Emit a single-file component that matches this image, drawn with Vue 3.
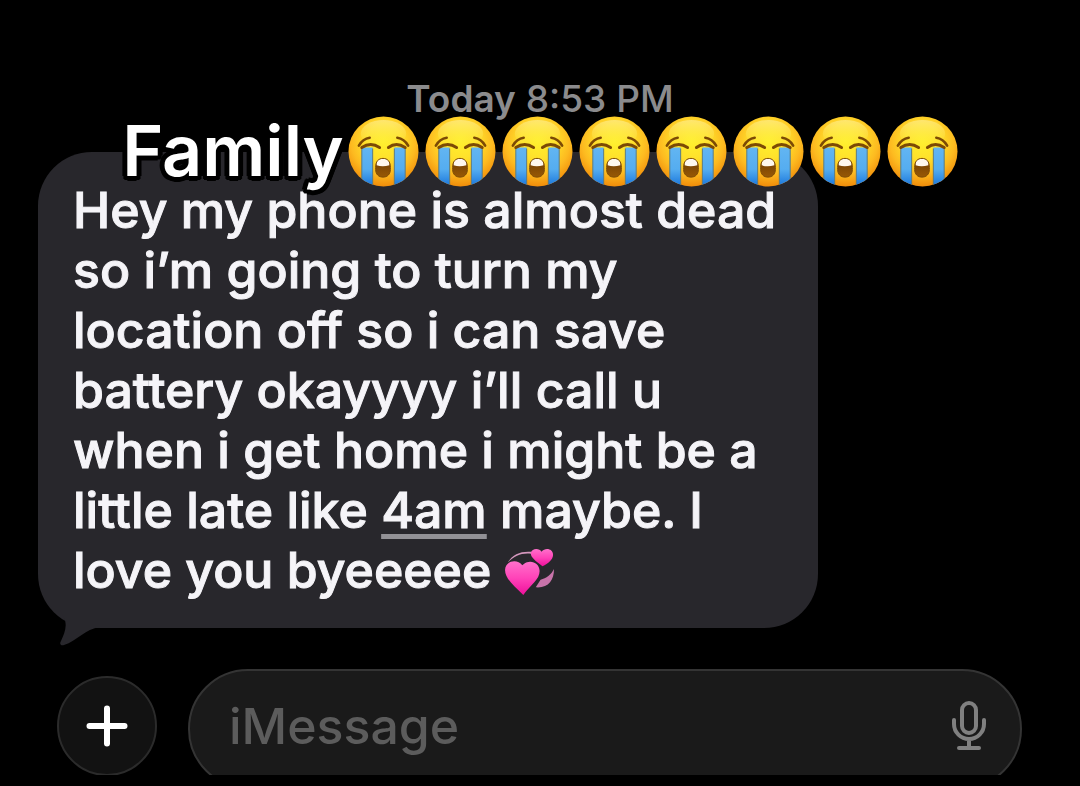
<script setup>
import { ref } from 'vue'

const draft = ref('')
const lines = [
  'Hey my phone is almost dead',
  'so i’m going to turn my',
  'location off so i can save',
  'battery okayyyy i’ll call u',
  'when i get home i might be a',
]
</script>

<template>
  <main class="chat">
    <svg class="defs" width="0" height="0" aria-hidden="true">
      <defs>
        <radialGradient id="face" cx="50%" cy="36%" r="64%">
          <stop offset="0" stop-color="#fff02c" />
          <stop offset="0.4" stop-color="#ffe02b" />
          <stop offset="0.72" stop-color="#fdba20" />
          <stop offset="1" stop-color="#f08c0a" />
        </radialGradient>
        <linearGradient id="shine" x1="0" y1="0" x2="0" y2="1">
          <stop offset="0" stop-color="#fff0a0" stop-opacity="0.6" />
          <stop offset="1" stop-color="#fff04a" stop-opacity="0" />
        </linearGradient>
        <linearGradient id="tear" x1="0" y1="0" x2="0" y2="1">
          <stop offset="0" stop-color="#62b5f2" />
          <stop offset="0.55" stop-color="#55adf0" />
          <stop offset="1" stop-color="#1673da" />
        </linearGradient>
        <linearGradient id="mouth" x1="0" y1="0" x2="0" y2="1">
          <stop offset="0" stop-color="#6b3a04" />
          <stop offset="1" stop-color="#9a5a05" />
        </linearGradient>
        <clipPath id="round"><circle cx="36" cy="36" r="35.5" /></clipPath>
        <clipPath id="lips"><path d="M28 52C28 46 31 43 35.500 43S43 46 43 52V54C43 59 40 62 35.500 62S28 59 28 54Z" /></clipPath>
        <symbol id="sob" viewBox="0 0 72 72">
          <circle cx="36" cy="36" r="35.5" fill="url(#face)" />
          <ellipse cx="36" cy="18" rx="23" ry="14" fill="url(#shine)" />
          <g clip-path="url(#round)">
            <path d="M14 32H25V72H14Z" fill="url(#tear)" />
            <path d="M47 32H58V72H47Z" fill="url(#tear)" />
            <path d="M14 33V72M25 33V72M47 33V72M58 33V72" stroke="#597b83" stroke-width="1" />
          </g>
          <g fill="none" stroke="#7c4a05" stroke-linecap="round">
            <path d="M11 30Q15 23 22 22" stroke-width="2.6" />
            <path d="M50 22Q57 23 61 30" stroke-width="2.6" />
            <path d="M14 32Q23 26 32 32" stroke-width="3" />
            <path d="M41 32Q49 26 58 32" stroke-width="3" />
          </g>
          <g clip-path="url(#lips)">
            <path d="M27 42H44V63H27Z" fill="url(#mouth)" />
            <path d="M29 42H42V50Q35 52 29 50Z" fill="#fff8ee" />
          </g>
          <path d="M28 52C28 46 31 43 35.500 43S43 46 43 52V54C43 59 40 62 35.500 62S28 59 28 54Z" fill="none" stroke="#7c4a05" />
        </symbol>
        <linearGradient id="pink" x1="0" y1="0" x2="0" y2="1">
          <stop offset="0" stop-color="#ff70cb" />
          <stop offset="0.5" stop-color="#ff43b8" />
          <stop offset="1" stop-color="#ee109b" />
        </linearGradient>
      </defs>
    </svg>

    <p class="stamp"><b>Today</b> 8:53 PM</p>

    <section class="thread">
      <article class="bubble">
        <p class="message">
          <template v-for="line in lines" :key="line">{{ line }}<br /></template>
          little late like <a class="time" href="#">4am</a> maybe. I<br />
          love you byeeeee
          <svg class="hearts" viewBox="0 0 52 50" role="img" aria-label="Revolving hearts">
            <path d="M3 15C8 6 17 3 28 4L27 6C17 5 10 8 3 15Z" fill="#d497bd" />
            <path d="M51 22C51 34 45 42 32 41L37 33C43 32 48 28 51 22Z" fill="#c873aa" />
            <path d="M39 19C31 13 26 9 27 5C28 0 36 0 38 4C42 -1 50 1 50 7C50 12 45 16 39 19Z" fill="url(#pink)" />
            <path d="M19 49C9 39 0 32 0 23C0 13 13 11 18 18C25 11 36 15 36 24C36 33 27 38 19 49Z" fill="url(#pink)" />
          </svg>
        </p>
        <svg class="tail" viewBox="0 0 44 36" aria-hidden="true">
          <path d="M0 0L4 8C8 16 4 24 1 31C-1 34 1 36 4 35C17 31 25 19 40 17H44V0Z" fill="#28272c" />
        </svg>
      </article>

      <h1 class="caption">
        <span class="word">Family</span>
        <span class="emojis">
          <svg v-for="n in 8" :key="n" class="emoji" role="img" aria-label="Loudly crying face"><use href="#sob" /></svg>
        </span>
      </h1>
    </section>

    <form class="composer" @submit.prevent>
      <button class="add" type="button" aria-label="Add attachment">
        <svg viewBox="0 0 42 42" aria-hidden="true"><path d="M21 3.500V38.500M3.500 21H38.500" /></svg>
      </button>
      <div class="field">
        <input v-model="draft" type="text" placeholder="iMessage" aria-label="iMessage" />
        <button class="mic" type="button" aria-label="Dictate">
          <svg viewBox="0 0 36 50" aria-hidden="true">
            <rect x="11" y="2" width="14" height="30" rx="7" />
            <path d="M3 19V23A15 15 0 0 0 33 23V19M18 38V47M8 47H28" />
          </svg>
        </button>
      </div>
    </form>
  </main>
</template>

<style>
body {
  margin: 0;
  background: #000;
}
</style>

<style scoped>
.chat {
  box-sizing: border-box;
  min-height: 100vh;
  padding-top: 76px;
  background: #000;
  font-family: Inter, "Liberation Sans", sans-serif;
  overflow: hidden;
}
.defs {
  position: absolute;
}
.stamp {
  margin: 0;
  height: 76px;
  color: #8b8b8d;
  font-size: 37px;
  line-height: 46px;
  font-weight: 500;
  text-align: center;
}
.stamp b {
  font-weight: 600;
}
.thread {
  position: relative;
}
.bubble {
  position: relative;
  margin: 0 262px 0 38px;
  padding: 28px 0 28px 35px;
  border-radius: 54px;
  background: #28272c;
}
.message {
  margin: 0;
  color: #f5f4f8;
  font-size: 50px;
  line-height: 60px;
  font-weight: 500;
  -webkit-text-stroke: 1px #f5f4f8;
  white-space: nowrap;
}
.time {
  color: inherit;
  text-decoration: underline 5px #929196;
  text-underline-offset: 6px;
  text-decoration-skip-ink: none;
}
.hearts {
  width: 50px;
  height: 48px;
  vertical-align: -8px;
}
.tail {
  position: absolute;
  left: 22px;
  bottom: -18px;
  width: 44px;
  height: 36px;
}
.caption {
  position: absolute;
  top: -41px;
  left: 0;
  right: 0;
  display: flex;
  justify-content: center;
  align-items: center;
  gap: 4px;
  margin: 0;
  line-height: 80px;
}
.word {
  color: #fff;
  font-size: 70px;
  font-weight: 600;
  text-shadow:
    5px 0 #000, -5px 0 #000, 0 5px #000, 0 -5px #000,
    4px 3px #000, -4px 3px #000, 4px -3px #000, -4px -3px #000,
    3px 4px #000, -3px 4px #000, 3px -4px #000, -3px -4px #000;
}
.emojis {
  display: flex;
  gap: 6px;
}
.emoji {
  flex: none;
  width: 71px;
  height: 71px;
}
.composer {
  box-sizing: border-box;
  display: flex;
  align-items: flex-start;
  gap: 31px;
  height: 106px;
  margin-top: 41px;
  padding: 0 58px 0 57px;
  overflow: hidden;
}
.add {
  box-sizing: border-box;
  flex: none;
  display: grid;
  place-items: center;
  width: 100px;
  height: 100px;
  margin: 7px 0 0;
  padding: 0;
  border: 2px solid #2b2b2b;
  border-radius: 50%;
  background: #121212;
}
.add svg {
  width: 42px;
  height: 42px;
  fill: none;
  stroke: #fff;
  stroke-width: 6;
  stroke-linecap: round;
}
.field {
  box-sizing: border-box;
  flex: 1;
  min-width: 0;
  display: flex;
  align-items: center;
  height: 120px;
  padding: 0 33px 6px 39px;
  border: 2px solid #343434;
  border-radius: 60px;
  background: #1a1a1a;
}
input {
  flex: 1;
  min-width: 0;
  height: 64px;
  padding: 0;
  border: 0;
  outline: 0;
  background: transparent;
  color: #fff;
  font: 500 50px Inter, "Liberation Sans", sans-serif;
}
input::placeholder {
  color: #5c5c5c;
  opacity: 1;
}
.mic {
  flex: none;
  padding: 0;
  border: 0;
  background: none;
}
.mic svg {
  display: block;
  width: 36px;
  height: 50px;
  fill: none;
  stroke: #808080;
  stroke-width: 4;
  stroke-linecap: round;
}
</style>
